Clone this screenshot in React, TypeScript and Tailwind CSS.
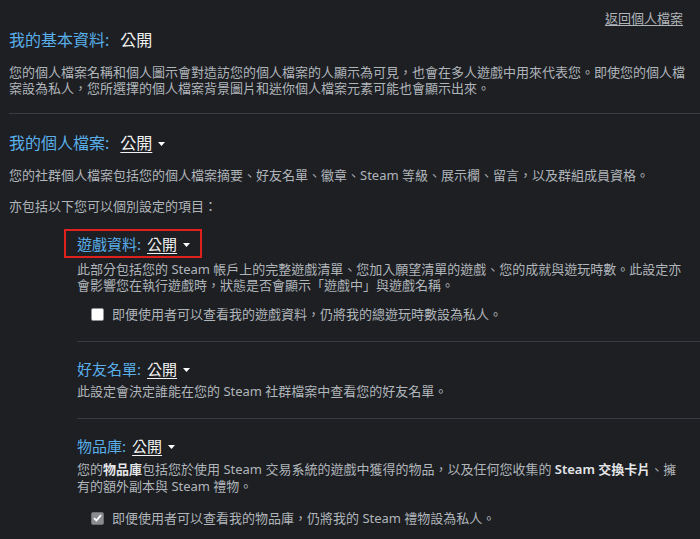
import React from "react";

const font = { fontFamily: '"Noto Sans", "Noto Sans CJK TC", sans-serif' };

function Caret() {
  return (
    <svg width="7" height="4" viewBox="0 0 7 4" className="ml-[6px] mt-[2px]">
      <path d="M0 0 L7 0 L3.5 4 Z" fill="#ffffff" />
    </svg>
  );
}

function Heading({ label, big, caret }: { label: string; big?: boolean; caret?: boolean }) {
  return (
    <div className={`flex items-center ${big ? "text-[16px] leading-[24px]" : "text-[15px] leading-[24px]"}`}>
      <span className="text-[#5aafea]">{label}:</span>
      <span
        className={`${big ? "ml-[11px]" : "ml-[6px]"} text-[#f2f2f2] ${
          caret ? "underline underline-offset-[3px] decoration-[1px]" : ""
        }`}
      >
        公開
      </span>
      {caret && <Caret />}
    </div>
  );
}

function Box({ checked }: { checked?: boolean }) {
  if (checked) {
    return (
      <span className="w-[13px] h-[13px] rounded-[2px] bg-[#8a8c8f] border border-[#6c6e71] flex items-center justify-center">
        <svg width="9" height="8" viewBox="0 0 9 8">
          <path d="M1 4.2 L3.4 6.5 L8 1.2" stroke="#ffffff" strokeWidth="1.8" fill="none" />
        </svg>
      </span>
    );
  }
  return <span className="w-[13px] h-[13px] rounded-[2px] bg-white border border-[#8e9196]" />;
}

export default function App() {
  return (
    <div lang="zh-Hant-TW" className="bg-[#1d1f23] w-[700px] h-[539px] overflow-hidden text-[#b0b5ba]" style={font}>
      <div className="pt-[9px] pr-[17px] text-right text-[13px] leading-[18px]">
        <a className="underline underline-offset-2 text-[#b0b5ba]">返回個人檔案</a>
      </div>

      <div className="pl-[9px] mt-[1px]">
        <Heading label="我的基本資料" big />
        <p className="mt-[12px] text-[13px] leading-[16px] whitespace-nowrap">
          您的個人檔案名稱和個人圖示會對造訪您的個人檔案的人顯示為可見，也會在多人遊戲中用來代表您。即使您的個人檔
          <br />
          案設為私人，您所選擇的個人檔案背景圖片和迷你個人檔案元素可能也會顯示出來。
        </p>
      </div>

      <div className="ml-[9px] mt-[17px] h-px bg-[#383b42]" />

      <div className="pl-[9px] mt-[17px]">
        <Heading label="我的個人檔案" big caret />
        <p className="mt-[12px] text-[13px] leading-[16px] whitespace-nowrap">
          您的社群個人檔案包括您的個人檔案摘要、好友名單、徽章、Steam 等級、展示欄、留言，以及群組成員資格。
        </p>
        <p className="mt-[15px] text-[13px] leading-[16px]">亦包括以下您可以個別設定的項目：</p>
      </div>

      <div className="pl-[77px] mt-[15px]">
        {/* game details */}
        <div className="-ml-[13px] inline-flex border-2 border-[#e0201c] pl-[11px] pr-[10px] h-[29px] items-center">
          <Heading label="遊戲資料" caret />
        </div>
        <p className="mt-[3px] text-[13px] leading-[16px] whitespace-nowrap">
          此部分包括您的 Steam 帳戶上的完整遊戲清單、您加入願望清單的遊戲、您的成就與遊玩時數。此設定亦
          <br />
          會影響您在執行遊戲時，狀態是否會顯示「遊戲中」與遊戲名稱。
        </p>
        <label className="mt-[11px] ml-[14px] flex items-center gap-[8px] text-[13px] leading-[20px]">
          <Box />
          <span>即便使用者可以查看我的遊戲資料，仍將我的總遊玩時數設為私人。</span>
        </label>

        <div className="mt-[17px] h-px bg-[#383b42]" />

        {/* friends */}
        <div className="mt-[15px]">
          <Heading label="好友名單" caret />
        </div>
        <p className="mt-[2px] text-[13px] leading-[16px]">此設定會決定誰能在您的 Steam 社群檔案中查看您的好友名單。</p>

        <div className="mt-[19px] h-px bg-[#383b42]" />

        {/* inventory */}
        <div className="mt-[15px]">
          <Heading label="物品庫" caret />
        </div>
        <p className="mt-[3px] text-[13px] leading-[17px] whitespace-nowrap">
          您的<span className="text-[#e4e6e8] font-semibold">物品庫</span>包括您於使用 Steam 交易系統的遊戲中獲得的物品，以及任何您收集的{" "}
          <span className="text-[#e4e6e8] font-semibold">Steam 交換卡片</span>、擁
          <br />
          有的額外副本與 Steam 禮物。
        </p>
        <label className="mt-[13px] ml-[14px] flex items-center gap-[8px] text-[13px] leading-[20px]">
          <Box checked />
          <span>即便使用者可以查看我的物品庫，仍將我的 Steam 禮物設為私人。</span>
        </label>
      </div>
    </div>
  );
}
